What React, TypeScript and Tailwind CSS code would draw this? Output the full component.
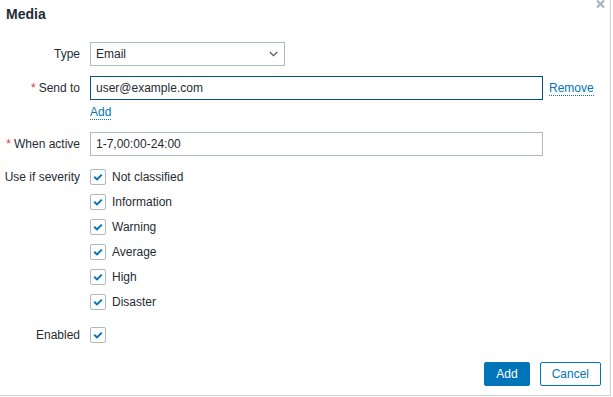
const severities = ['Not classified', 'Information', 'Warning', 'Average', 'High', 'Disaster'];

function Check() {
  return (
    <span className="w-4 h-4 shrink-0 rounded-[2px] border border-[#acbbc2] bg-white flex items-center justify-center">
      <svg width="12" height="12" viewBox="0 0 12 12">
        <path d="M2.2 5.8 L5 8.4 L9.8 3.6" fill="none" stroke="#0275b8" strokeWidth="2" />
      </svg>
    </span>
  );
}

function Label({ text, required }: { text: string; required?: boolean }) {
  return (
    <div className="text-right text-[#1f2c33] whitespace-nowrap">
      {required && <span className="text-[#e33734] mr-[3px]">*</span>}
      {text}
    </div>
  );
}

export default function App() {
  return (
    <div
      className="relative w-[611px] h-[396px] bg-white border-r border-b border-[#c8d0d5] text-[12px] text-[#1f2c33]"
      style={{ fontFamily: '"Liberation Sans", Arial, sans-serif' }}
    >
      {/* close */}
      <svg className="absolute left-[596px] top-0" width="9" height="9" viewBox="0 0 9 9">
        <path d="M1 0.5 L8 7.5 M8 0.5 L1 7.5" stroke="#aab4bb" strokeWidth="2.2" />
      </svg>

      <div className="pl-[6px] pt-[6px] h-[42px] text-[14px] leading-[16px] font-bold text-[#1f2c33]">Media</div>

      <div className="grid grid-cols-[80px_1fr] gap-x-[10px]">
        {/* Type */}
        <div className="h-6 flex items-center justify-end"><Label text="Type" /></div>
        <div className="h-6">
          <div className="w-[195px] h-6 border border-[#acbbc2] flex items-center justify-between pl-[5px] pr-[6px]">
            <span>Email</span>
            <svg width="9" height="6" viewBox="0 0 9 6">
              <path d="M0.8 1 L4.5 4.6 L8.2 1" fill="none" stroke="#4f5a60" strokeWidth="1.2" />
            </svg>
          </div>
        </div>

        {/* Send to */}
        <div className="mt-[10px] h-6 flex items-center justify-end"><Label text="Send to" required /></div>
        <div className="mt-[10px]">
          <div className="flex items-center gap-[6px]">
            <div className="w-[453px] h-6 border border-[#0b4f7d] flex items-center pl-[5px]">user@example.com</div>
            <span className="text-[#0275b8] border-b border-dotted border-[#0275b8] leading-[14px]">Remove</span>
          </div>
          <div className="h-[22px] flex items-center">
            <span className="text-[#0275b8] border-b border-dotted border-[#0275b8] leading-[14px] mt-[2px]">Add</span>
          </div>
        </div>

        {/* When active */}
        <div className="mt-[10px] h-6 flex items-center justify-end"><Label text="When active" required /></div>
        <div className="mt-[10px]">
          <div className="w-[453px] h-6 border border-[#acbbc2] flex items-center pl-[5px]">1-7,00:00-24:00</div>
        </div>

        {/* Severity */}
        <div className="mt-[13px] h-4 flex items-center justify-end"><Label text="Use if severity" /></div>
        <div className="mt-[13px] flex flex-col gap-[9px]">
          {severities.map((s) => (
            <div key={s} className="h-4 flex items-center gap-[6px]">
              <Check />
              <span>{s}</span>
            </div>
          ))}
        </div>

        {/* Enabled */}
        <div className="mt-[17px] h-4 flex items-center justify-end"><Label text="Enabled" /></div>
        <div className="mt-[17px] h-4 flex items-center"><Check /></div>
      </div>

      <div className="mt-[19px] pr-[9px] flex justify-end gap-[10px]">
        <button className="h-6 px-[11px] rounded-[2px] bg-[#0275b8] border border-[#0275b8] text-white">Add</button>
        <button className="h-6 px-[11px] rounded-[2px] bg-white border border-[#0275b8] text-[#0275b8]">Cancel</button>
      </div>
    </div>
  );
}
